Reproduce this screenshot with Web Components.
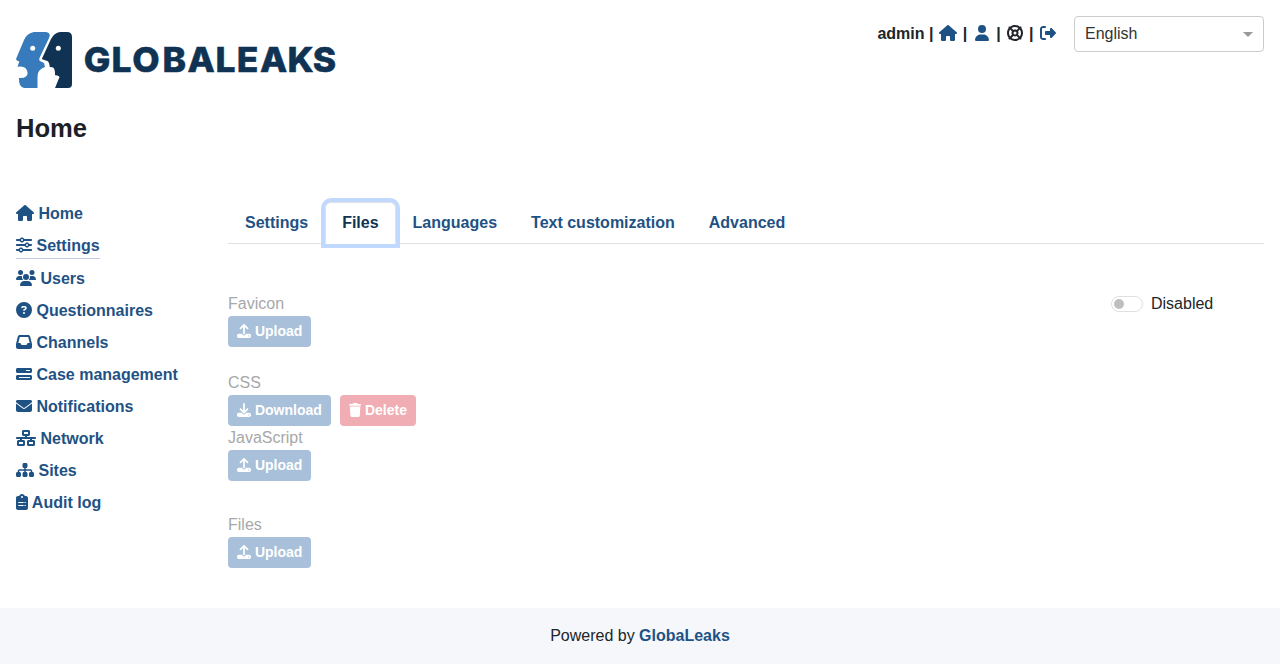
<!DOCTYPE html>
<html lang="en">
<head>
<meta charset="utf-8">
<title>GlobaLeaks</title>
<style>
html,body{margin:0;background:#fff}
body{font:16px/24px "Liberation Sans",Arial,sans-serif;color:#212529}
</style>
</head>
<body>
<gl-app></gl-app>
<script>
const ICONS = {
home:[576,"M575.8 255.5c0 18-15 32.1-32 32.1l-32 0 .7 160.2c0 2.7-.2 5.4-.5 8.1l0 16.2c0 22.1-17.9 40-40 40l-16 0c-1.1 0-2.2 0-3.3-.1c-1.4 .1-2.8 .1-4.2 .1L416 512l-24 0c-22.1 0-40-17.9-40-40l0-24 0-64c0-17.7-14.3-32-32-32l-64 0c-17.7 0-32 14.3-32 32l0 64 0 24c0 22.1-17.9 40-40 40l-24 0-31.9 0c-1.5 0-3-.1-4.5-.2c-1.2 .1-2.4 .2-3.6 .2l-16 0c-22.1 0-40-17.9-40-40l0-112c0-.9 0-1.9 .1-2.8l0-69.7-32 0c-18 0-32-14-32-32.1c0-9 3-17 10-24L266.4 8c7-7 15-8 22-8s15 2 21 7L564.8 231.5c8 7 12 15 11 24z"],
user:[448,"M224 256A128 128 0 1 0 224 0a128 128 0 1 0 0 256zm-45.7 48C79.8 304 0 383.8 0 482.3C0 498.7 13.3 512 29.7 512l388.6 0c16.4 0 29.7-13.3 29.7-29.7C448 383.8 368.2 304 269.7 304l-91.4 0z"],
ring:[512,"M367.2 412.5C335.9 434.9 297.5 448 256 448s-79.9-13.1-111.2-35.5l58-58c15.8 8.6 34 13.5 53.3 13.5s37.4-4.9 53.3-13.5l58 58zm90.7 .8c33.8-43.4 54-98 54-157.3s-20.2-113.9-54-157.3c9-12.5 7.9-30.1-3.4-41.3S425.8 45 413.3 54C369.9 20.2 315.3 0 256 0S142.1 20.2 98.7 54c-12.5-9-30.1-7.9-41.3 3.4S45 86.2 54 98.7C20.2 142.1 0 196.7 0 256s20.2 113.9 54 157.3c-9 12.5-7.9 30.1 3.4 41.3S86.2 467 98.7 458c43.4 33.8 98 54 157.3 54s113.9-20.2 157.3-54c12.5 9 30.1 7.9 41.3-3.4s12.4-28.8 3.4-41.3zm-45.5-46.1l-58-58c8.6-15.8 13.5-34 13.5-53.3s-4.9-37.4-13.5-53.3l58-58C434.9 176.1 448 214.5 448 256s-13.1 79.9-35.5 111.2zM367.2 99.5l-58 58c-15.8-8.6-34-13.5-53.3-13.5s-37.4 4.9-53.3 13.5l-58-58C176.1 77.1 214.5 64 256 64s79.9 13.1 111.2 35.5zM157.5 309.3l-58 58C77.1 335.9 64 297.5 64 256s13.1-79.9 35.5-111.2l58 58c-8.6 15.8-13.5 34-13.5 53.3s4.9 37.4 13.5 53.3zM208 256a48 48 0 1 1 96 0 48 48 0 1 1 -96 0z"],
logout:[512,"M377.9 105.9L500.7 228.7c7.2 7.2 11.3 17.1 11.3 27.3s-4.1 20.1-11.3 27.3L377.9 406.1c-6.4 6.4-15 9.9-24 9.9c-18.7 0-33.9-15.2-33.9-33.9l0-62.1-128 0c-17.7 0-32-14.3-32-32l0-64c0-17.7 14.3-32 32-32l128 0 0-62.1c0-18.7 15.2-33.9 33.9-33.9c9 0 17.6 3.6 24 9.9zM160 96L96 96c-17.7 0-32 14.3-32 32l0 256c0 17.7 14.3 32 32 32l64 0c17.7 0 32 14.3 32 32s-14.3 32-32 32l-64 0c-53 0-96-43-96-96L0 128C0 75 43 32 96 32l64 0c17.7 0 32 14.3 32 32s-14.3 32-32 32z"],
sliders:[512,"M0 416c0 17.7 14.3 32 32 32l54.7 0c12.3 28.3 40.5 48 73.3 48s61-19.7 73.3-48L480 448c17.7 0 32-14.3 32-32s-14.3-32-32-32l-246.7 0c-12.3-28.3-40.5-48-73.3-48s-61 19.7-73.3 48L32 384c-17.7 0-32 14.3-32 32zm128 0a32 32 0 1 1 64 0 32 32 0 1 1 -64 0zM320 256a32 32 0 1 1 64 0 32 32 0 1 1 -64 0zm32-80c-32.8 0-61 19.7-73.3 48L32 224c-17.7 0-32 14.3-32 32s14.3 32 32 32l246.7 0c12.3 28.3 40.5 48 73.3 48s61-19.7 73.3-48l54.7 0c17.7 0 32-14.3 32-32s-14.3-32-32-32l-54.7 0c-12.3-28.3-40.5-48-73.3-48zM192 128a32 32 0 1 1 0-64 32 32 0 1 1 0 64zm73.3-64C253 35.7 224.8 16 192 16s-61 19.7-73.3 48L32 64C14.3 64 0 78.3 0 96s14.3 32 32 32l86.7 0c12.3 28.3 40.5 48 73.3 48s61-19.7 73.3-48L480 128c17.7 0 32-14.3 32-32s-14.3-32-32-32L265.3 64z"],
users:[640,"M144 0a80 80 0 1 1 0 160A80 80 0 1 1 144 0zM512 0a80 80 0 1 1 0 160A80 80 0 1 1 512 0zM0 298.7C0 239.8 47.8 192 106.7 192l42.7 0c15.9 0 31 3.5 44.6 9.7c-1.3 7.2-1.9 14.7-1.9 22.3c0 38.2 16.8 72.5 43.3 96c-.2 0-.4 0-.7 0L21.3 320C9.6 320 0 310.4 0 298.7zM405.3 320c-.2 0-.4 0-.7 0c26.6-23.5 43.3-57.8 43.3-96c0-7.6-.7-15-1.9-22.3c13.6-6.3 28.7-9.7 44.6-9.7l42.7 0C592.2 192 640 239.8 640 298.7c0 11.8-9.6 21.3-21.3 21.3l-213.3 0zM224 224a96 96 0 1 1 192 0 96 96 0 1 1 -192 0zM128 485.3C128 411.7 187.7 352 261.3 352l117.3 0C452.3 352 512 411.7 512 485.3c0 14.7-11.9 26.7-26.7 26.7l-330.7 0c-14.7 0-26.7-11.9-26.7-26.7z"],
question:[512,"M256 512A256 256 0 1 0 256 0a256 256 0 1 0 0 512zM169.8 165.3c7.9-22.3 29.1-37.3 52.8-37.3l58.3 0c34.9 0 63.1 28.3 63.1 63.1c0 22.6-12.1 43.5-31.7 54.8L280 264.4c-.2 13-10.9 23.6-24 23.6c-13.3 0-24-10.7-24-24l0-13.5c0-8.6 4.6-16.5 12.1-20.8l44.3-25.4c4.7-2.7 7.6-7.7 7.6-13.1c0-8.4-6.800-15.1-15.1-15.1l-58.3 0c-3.4 0-6.4 2.1-7.5 5.3l-.4 1.2c-4.4 12.5-18.2 19-30.6 14.6s-19-18.2-14.6-30.6l.4-1.2zM224 352a32 32 0 1 1 64 0 32 32 0 1 1 -64 0z"],
inbox:[512,"M121 32C91.6 32 66 52 58.9 80.5L1.9 308.4C.6 313.5 0 318.7 0 323.9L0 416c0 35.3 28.7 64 64 64l384 0c35.3 0 64-28.7 64-64l0-92.1c0-5.2-.6-10.4-1.9-15.5l-57-227.9C446 52 420.4 32 391 32L121 32zm0 64l270 0 48 192-51.2 0c-12.1 0-23.2 6.8-28.6 17.7l-14.3 28.6c-5.4 10.8-16.5 17.7-28.6 17.7l-120.4 0c-12.1 0-23.2-6.8-28.6-17.7l-14.3-28.6c-5.4-10.8-16.5-17.7-28.6-17.7L73 288 121 96z"],
bars:[512,"M448 160l-128 0 0-32 128 0 0 32zM48 64C21.5 64 0 85.5 0 112l0 64c0 26.5 21.5 48 48 48l416 0c26.5 0 48-21.5 48-48l0-64c0-26.5-21.5-48-48-48L48 64zM448 352l0 32-352 0 0-32 352 0zM48 288c-26.5 0-48 21.5-48 48l0 64c0 26.5 21.5 48 48 48l416 0c26.5 0 48-21.5 48-48l0-64c0-26.5-21.5-48-48-48L48 288z"],
envelope:[512,"M48 64C21.5 64 0 85.5 0 112c0 15.1 7.1 29.3 19.2 38.4L236.8 313.6c11.4 8.5 27 8.5 38.4 0L492.8 150.4c12.1-9.1 19.2-23.3 19.2-38.4c0-26.5-21.5-48-48-48L48 64zM0 176L0 384c0 35.3 28.7 64 64 64l384 0c35.3 0 64-28.7 64-64l0-208L294.4 339.2c-22.8 17.1-54 17.1-76.8 0L0 176z"],
network:[640,"M256 64l128 0 0 64-128 0 0-64zM240 0c-26.5 0-48 21.5-48 48l0 96c0 26.5 21.5 48 48 48l48 0 0 32L32 224c-17.7 0-32 14.3-32 32s14.3 32 32 32l96 0 0 32-48 0c-26.5 0-48 21.5-48 48l0 96c0 26.5 21.5 48 48 48l160 0c26.5 0 48-21.5 48-48l0-96c0-26.5-21.5-48-48-48l-48 0 0-32 256 0 0 32-48 0c-26.5 0-48 21.5-48 48l0 96c0 26.5 21.5 48 48 48l160 0c26.5 0 48-21.5 48-48l0-96c0-26.5-21.5-48-48-48l-48 0 0-32 96 0c17.7 0 32-14.3 32-32s-14.3-32-32-32l-256 0 0-32 48 0c26.5 0 48-21.5 48-48l0-96c0-26.5-21.5-48-48-48L240 0zM96 448l0-64 128 0 0 64L96 448zm320-64l128 0 0 64-128 0 0-64z"],
sitemap:[576,"M208 80c0-26.5 21.5-48 48-48l64 0c26.5 0 48 21.5 48 48l0 64c0 26.5-21.5 48-48 48l-8 0 0 40 152 0c30.9 0 56 25.1 56 56l0 32 8 0c26.5 0 48 21.5 48 48l0 64c0 26.5-21.5 48-48 48l-64 0c-26.5 0-48-21.5-48-48l0-64c0-26.5 21.5-48 48-48l8 0 0-32c0-4.4-3.6-8-8-8l-152 0 0 40 8 0c26.5 0 48 21.5 48 48l0 64c0 26.5-21.5 48-48 48l-64 0c-26.5 0-48-21.5-48-48l0-64c0-26.5 21.5-48 48-48l8 0 0-40-152 0c-4.4 0-8 3.6-8 8l0 32 8 0c26.5 0 48 21.5 48 48l0 64c0 26.5-21.5 48-48 48l-64 0c-26.5 0-48-21.5-48-48l0-64c0-26.5 21.5-48 48-48l8 0 0-32c0-30.9 25.1-56 56-56l152 0 0-40-8 0c-26.5 0-48-21.5-48-48l0-64z"],
clipboard:[384,"M192 0c-41.8 0-77.4 26.7-90.5 64L64 64C28.7 64 0 92.7 0 128L0 448c0 35.3 28.7 64 64 64l256 0c35.3 0 64-28.7 64-64l0-320c0-35.3-28.7-64-64-64l-37.5 0C269.4 26.7 233.8 0 192 0zm0 64a32 32 0 1 1 0 64 32 32 0 1 1 0-64zM72 256l170 0 0 32-170 0zM72 352l170 0 0 32-170 0zM272 256l40 0 0 32-40 0zM272 352l40 0 0 32-40 0z"],
upload:[512,"M288 109.3L288 352c0 17.7-14.3 32-32 32s-32-14.3-32-32l0-242.7-73.4 73.4c-12.5 12.5-32.8 12.5-45.3 0s-12.5-32.8 0-45.3l128-128c12.5-12.5 32.8-12.5 45.3 0l128 128c12.5 12.5 12.5 32.8 0 45.3s-32.8 12.5-45.3 0L288 109.3zM64 352l128 0c0 35.3 28.7 64 64 64s64-28.7 64-64l128 0c35.3 0 64 28.7 64 64l0 32c0 35.3-28.7 64-64 64L64 512c-35.3 0-64-28.7-64-64l0-32c0-35.3 28.7-64 64-64zM432 456a24 24 0 1 0 0-48 24 24 0 1 0 0 48z"],
download:[512,"M288 32c0-17.7-14.3-32-32-32s-32 14.3-32 32l0 242.7-73.4-73.4c-12.5-12.5-32.8-12.5-45.3 0s-12.5 32.8 0 45.3l128 128c12.5 12.5 32.8 12.5 45.3 0l128-128c12.5-12.5 12.5-32.8 0-45.3s-32.8-12.5-45.3 0L288 274.7 288 32zM64 352c-35.3 0-64 28.7-64 64l0 32c0 35.3 28.7 64 64 64l384 0c35.3 0 64-28.7 64-64l0-32c0-35.3-28.7-64-64-64l-101.5 0-45.3 45.3c-25 25-65.5 25-90.5 0L165.5 352 64 352zm368 56a24 24 0 1 1 0 48 24 24 0 1 1 0-48z"],
trash:[448,"M135.2 17.7L128 32 32 32C14.3 32 0 46.3 0 64S14.3 96 32 96l384 0c17.7 0 32-14.3 32-32s-14.3-32-32-32l-96 0-7.2-14.3C307.4 6.8 296.3 0 284.2 0L163.8 0c-12.1 0-23.2 6.8-28.6 17.7zM416 128L32 128 53.2 467c1.6 25.3 22.6 45 47.9 45l245.8 0c25.3 0 46.3-19.7 47.9-45L416 128z"]
};
function define(name, html) {
  customElements.define(name, class extends HTMLElement {
    constructor() {
      super();
      const root = this.attachShadow({mode: "open"});
      root.innerHTML = typeof html === "function" ? html(this) : html;
    }
  });
}

define("gl-icon", el => {
  const [w, d] = ICONS[el.getAttribute("name")];
  return `<style>:host{display:inline-block;vertical-align:-.125em;height:1em;line-height:0;white-space:normal}svg{display:block;height:1em;width:${w / 512}em}</style><svg viewBox="0 0 ${w} 512" fill="currentColor" aria-hidden="true"><path d="${d}"/></svg>`;
});

define("gl-logo", `<style>:host{display:block;height:56px}svg{display:block;overflow:visible}text{font:800 34.4px Inter,sans-serif;fill:#103253;stroke:#103253;stroke-width:.5}</style>
<svg width="322" height="56" viewBox="0 0 322 56">
<path fill="#377bbc" d="M18 0H30Q35.500 1 33 6L23.500 26Q22.500 28.500 25 29.500L28 31L29 35Q24 37 22.500 40Q21.500 42 21.500 45V56H8Q2.500 54.500 3 46Q7.500 46.500 10 44.500Q12.500 42 11 38.500Q9.500 34 1.500 34.700L3.300 29.500Q0 28.500 0 27L8 8Q11 1 18 0Z"/>
<path fill="#103253" d="M44 0H51Q56 0 56 5V52Q56 56 52 56H39L43.500 45Q42 42.500 39 44L38 38Q37 34.500 33 35L31 29L25.800 27L35 7Q38 1 44 0Z"/>
<path fill="#fff" d="M22 56V45Q23 39 29 36.500V30.500Q31 27 33 31L34 35.500H37Q39 36 39 43L43 44.500L38.500 56Z"/>
<circle cx="16.700" cy="16.300" r="2.500" fill="#fff"/><circle cx="42.300" cy="16.300" r="2.500" fill="#fff"/>
<text transform="scale(1.03 1)" y="40.200" x="65.900 92.800 112.800 142.300 166.600 193.800 214.300 236.800 263.500 288.200">GLOBALEAKS</text>
</svg>`);

define("gl-select", `<style>:host{display:flex;align-items:center;justify-content:space-between;box-sizing:border-box;width:190px;height:36px;border:1px solid #ccc;border-radius:4px;padding:0 10px;color:#333}
i{border:5px solid transparent;border-top-color:#999;border-bottom:0}</style><span><slot></slot></span><i></i>`);

define("gl-header", `<style>:host{display:flex;justify-content:space-between;padding:16px 16px 0;height:72px}
gl-logo{margin-top:16px}.r{display:flex;align-items:flex-start;gap:18px}.u{font-weight:700;white-space:pre;padding-top:6px}gl-icon{color:#1f5284}.h{padding:0 1.500px 0 1px}.p{padding:0 3px}gl-icon.d{color:#212529;padding:0 2px 0 1.500px}.o{padding-left:2px}</style>
<gl-logo></gl-logo><div class="r"><div class="u">admin | <gl-icon class="h" name="home"></gl-icon> | <gl-icon class="p" name="user"></gl-icon> | <gl-icon class="d" name="ring"></gl-icon> | <gl-icon class="o" name="logout"></gl-icon></div><gl-select>English</gl-select></div>`);

define("gl-nav-item", el => `<style>:host{display:block;padding:4px 0;font-weight:700;color:#1f5284;white-space:nowrap}
span{display:block;width:fit-content;height:24px}:host([active]) span{height:24px;border-bottom:1px solid #bfcae2}</style>
<span><gl-icon name="${el.getAttribute("icon")}"></gl-icon> <slot></slot></span>`);

define("gl-sidebar", `<style>:host{display:block;width:212px;flex:none;padding-top:2px}</style>
<gl-nav-item icon="home">Home</gl-nav-item>
<gl-nav-item icon="sliders" active>Settings</gl-nav-item>
<gl-nav-item icon="users">Users</gl-nav-item>
<gl-nav-item icon="question">Questionnaires</gl-nav-item>
<gl-nav-item icon="inbox">Channels</gl-nav-item>
<gl-nav-item icon="bars">Case management</gl-nav-item>
<gl-nav-item icon="envelope">Notifications</gl-nav-item>
<gl-nav-item icon="network">Network</gl-nav-item>
<gl-nav-item icon="sitemap">Sites</gl-nav-item>
<gl-nav-item icon="clipboard">Audit log</gl-nav-item>`);

define("gl-tab", `<style>:host{display:block;box-sizing:border-box;height:42px;padding:8px 16px 7px;border:1px solid transparent;border-radius:6px 6px 0 0;margin-bottom:-1px;font-weight:700;color:#1f5284}
:host([active]){color:#103253;background:#fff;border-color:#dee2e6 #dee2e6 #fff;box-shadow:0 0 0 4px #c2d9ff}</style><slot></slot>`);

define("gl-tabs", `<style>:host{display:flex;border-bottom:1px solid #dee2e6}</style>
<gl-tab>Settings</gl-tab><gl-tab active>Files</gl-tab><gl-tab>Languages</gl-tab><gl-tab>Text customization</gl-tab><gl-tab>Advanced</gl-tab>`);

define("gl-button", el => `<style>:host{display:inline-block;box-sizing:border-box;height:31px;padding:5px 9px;border-radius:4px;background:#a8c0d9;color:#fff;font-size:14px;line-height:21px;font-weight:700;white-space:nowrap}
:host([danger]){background:#f0adb4}</style><gl-icon name="${el.getAttribute("icon")}"></gl-icon> <slot></slot>`);

define("gl-field", el => `<style>:host{display:block}label{display:block;color:#a6a8a9}div{display:flex;gap:9px}</style><label>${el.getAttribute("label")}</label><div><slot></slot></div>`);

define("gl-switch", `<style>:host{display:flex;align-items:center;gap:8px;width:153px}
i{box-sizing:border-box;width:32px;height:16px;border:1px solid #dfdfdf;border-radius:8px;padding:2px;display:block}
i::after{content:"";display:block;width:10px;height:10px;border-radius:50%;background:#bfbfbf}</style><i></i><span><slot></slot></span>`);

define("gl-files", `<style>:host{display:flex;justify-content:space-between;align-items:flex-start;padding-top:48px}
.f{display:flex;flex-direction:column}.a{margin-bottom:24px}.b{margin-bottom:32px}</style>
<div class="f">
<gl-field class="a" label="Favicon"><gl-button icon="upload">Upload</gl-button></gl-field>
<gl-field label="CSS"><gl-button icon="download">Download</gl-button><gl-button danger icon="trash">Delete</gl-button></gl-field>
<gl-field class="b" label="JavaScript"><gl-button icon="upload">Upload</gl-button></gl-field>
<gl-field label="Files"><gl-button icon="upload">Upload</gl-button></gl-field>
</div><gl-switch>Disabled</gl-switch>`);

define("gl-footer", `<style>:host{display:block;box-sizing:border-box;height:56px;padding-top:16px;text-align:center;background:#f5f7fb}b{color:#1f5284}</style>Powered by <b>GlobaLeaks</b>`);

define("gl-app", `<style>:host{display:flex;flex-direction:column;height:664px}
h1{margin:24px 16px 0;font-size:25.600px;line-height:32px;font-weight:700;color:#1c1f26}
.m{display:flex;flex:1;padding:52px 16px 0}.c{flex:1;padding-top:6px}</style>
<gl-header></gl-header><h1>Home</h1><div class="m"><gl-sidebar></gl-sidebar><div class="c"><gl-tabs></gl-tabs><gl-files></gl-files></div></div><gl-footer></gl-footer>`);
</script>
</body>
</html>
